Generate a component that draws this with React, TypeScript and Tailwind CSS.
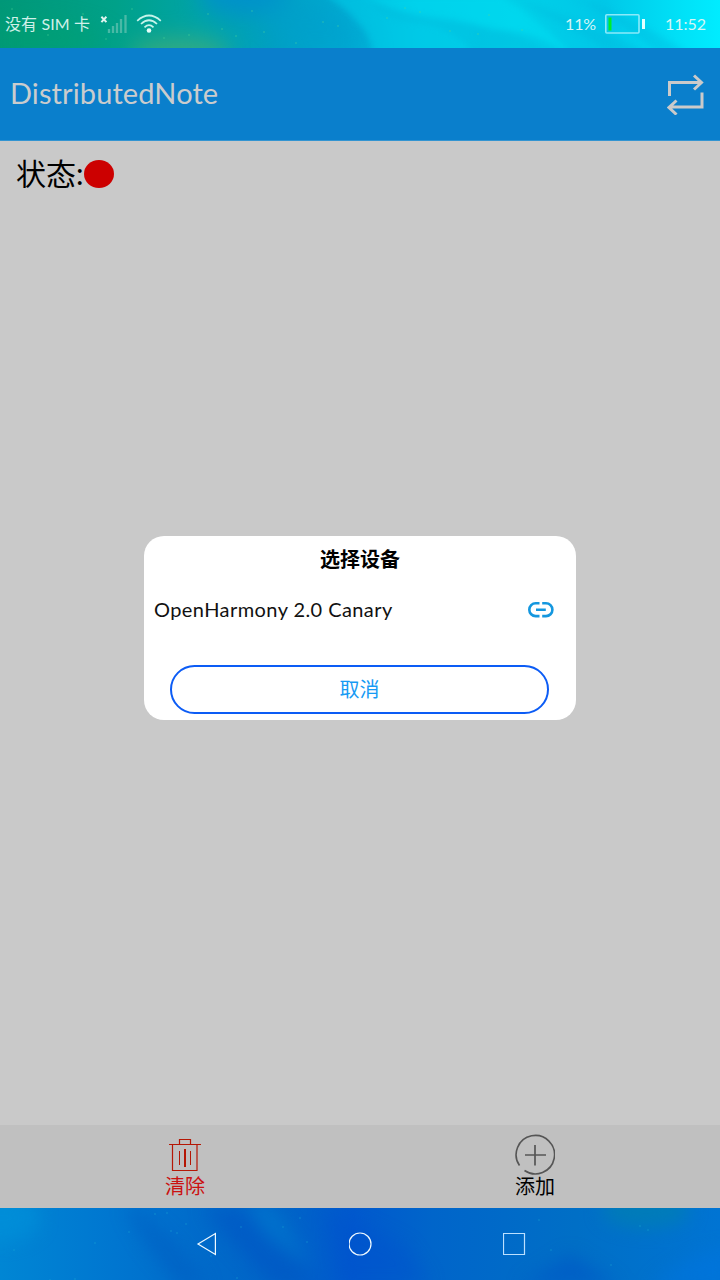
const specks = [[12, 9], [48, 35], [83, 14], [106, 39], [132, 9], [164, 38], [189, 35], [208, 14], [222, 29], [236, 36], [252, 11], [264, 32], [296, 43], [323, 22], [338, 26], [387, 18], [405, 8], [420, 12], [450, 31], [489, 15], [522, 30], [478, 34]];
const navSpecks = [[14, 42], [95, 35], [129, 24], [155, 6], [167, 5], [171, 23], [177, 25], [186, 16], [241, 19], [283, 19], [300, 10], [307, 34], [75, 71], [50, 72], [237, 70], [211, 48], [539, 12], [640, 18], [648, 22], [551, 42], [611, 57]];

function StatusArt() {
  return (
    <svg className="absolute inset-0" width="720" height="48" viewBox="0 0 720 48" aria-hidden="true">
      <defs>
        <linearGradient id="sky">
          <stop offset="0" stopColor="#009878" />
          <stop offset=".16" stopColor="#00a189" />
          <stop offset=".28" stopColor="#00a4a8" />
          <stop offset=".38" stopColor="#00a0c2" />
          <stop offset=".48" stopColor="#00acd4" />
          <stop offset=".58" stopColor="#00c4e4" />
          <stop offset=".72" stopColor="#00cfe8" />
          <stop offset=".84" stopColor="#00c8e8" />
          <stop offset=".95" stopColor="#00e2f8" />
          <stop offset="1" stopColor="#00ecff" />
        </linearGradient>
        <filter id="soft" filterUnits="userSpaceOnUse" x="-60" y="-60" width="840" height="170" colorInterpolationFilters="sRGB"><feGaussianBlur stdDeviation="11" /></filter>
        <filter id="edge" filterUnits="userSpaceOnUse" x="-60" y="-60" width="840" height="170" colorInterpolationFilters="sRGB"><feGaussianBlur stdDeviation="3" /></filter>
      </defs>
      <rect width="720" height="48" fill="url(#sky)" />
      <g filter="url(#soft)">
        <ellipse cx="242" cy="-5" rx="44" ry="20" fill="#0090cc" opacity=".9" />
        <ellipse cx="180" cy="54" rx="50" ry="17" fill="#3cac7c" opacity=".8" />
        <path d="M0 22Q50 14 110 36L80 52H0Z" fill="#00a26a" opacity=".4" />
        <path d="M255 0H325L363 30L373 53H290Z" fill="#009dcb" opacity=".5" />
      </g>
      <g filter="url(#edge)">
        <path d="M325-5H363Q380 15 457 19Q487 23 466 55H374Q370 33 358 23Q349 10 325-5Z" fill="#00cdea" opacity=".55" />
        <path d="M360-5H500Q540 20 570 52H545Q517 29 479 26Q390 15 360-5Z" fill="#00dff3" opacity=".5" />
        <path d="M364-4Q388 14 454 19Q482 25 491 31Q531 28 563 52H473Q450 25 409 22Q376 17 364-4Z" fill="#00bddd" opacity=".45" />
        <path d="M510-4L568 18L650 52H611Q556 20 510-4Z" fill="#00b8dd" opacity=".4" />
        <path d="M568-5Q610 7 650 30L687 52H656Q610 14 568-5Z" fill="#00b9df" opacity=".4" />
      </g>
      {specks.map(([x, y], i) => <circle key={i} cx={x} cy={y} r=".7" fill="#54dc9b" opacity=".65" />)}
    </svg>
  );
}

function NavArt() {
  return (
    <svg className="absolute inset-0" width="720" height="72" viewBox="0 0 720 72" aria-hidden="true">
      <defs>
        <linearGradient id="sea">
          <stop offset="0" stopColor="#0086d4" />
          <stop offset=".16" stopColor="#0076d0" />
          <stop offset=".3" stopColor="#0069c9" />
          <stop offset=".4" stopColor="#0064c8" />
          <stop offset=".49" stopColor="#0059ce" />
          <stop offset=".6" stopColor="#0065ca" />
          <stop offset=".8" stopColor="#006fc6" />
          <stop offset="1" stopColor="#0074d3" />
        </linearGradient>
        <filter id="mist" filterUnits="userSpaceOnUse" x="-60" y="-60" width="840" height="200" colorInterpolationFilters="sRGB"><feGaussianBlur stdDeviation="9" /></filter>
      </defs>
      <rect width="720" height="72" fill="url(#sea)" />
      <g filter="url(#mist)">
        <path d="M125 0L145 35L180 78H208L175 35L138 0Z" fill="#0054bd" opacity=".4" />
        <path d="M203 0L229 31L273 78H315L280 25L240 0Z" fill="#0051c4" opacity=".5" />
        <path d="M245-4L267 30L312 60L280 10L266-4Z" fill="#007bcf" opacity=".65" />
        <path d="M325 0L405 38L430 76H340Z" fill="#0050ce" opacity=".4" />
        <path d="M520 78L570 46L620 78Z" fill="#0055c6" opacity=".6" />
        <ellipse cx="646" cy="2" rx="44" ry="18" fill="#0080b0" opacity=".7" />
        <ellipse cx="0" cy="10" rx="40" ry="24" fill="#0092da" opacity=".6" />
        <path d="M650 80Q687 45 730 40V80Z" fill="#0075df" opacity=".6" />
      </g>
      {navSpecks.map(([x, y], i) => <circle key={i} cx={x} cy={y} r=".7" fill="#20b1d7" opacity=".6" />)}
    </svg>
  );
}

function StatusBar() {
  return (
    <div className="relative h-12 shrink-0 overflow-hidden">
      <StatusArt />
      <div className="relative flex h-full items-center text-[16px] leading-none text-[#d5f6f6]">
        <span className="ml-[5px] w-[95px] whitespace-nowrap tracking-[0.1px] text-[#d0f0e9]">没有 SIM 卡</span>
        <svg width="62" height="48" viewBox="0 0 62 48" fill="none">
          <path d="M1.4 16.8l5 5.3m0-5.3l-5 5.3" stroke="#e0f4ef" strokeWidth="2" />
          <path d="M9 29v4M13 26v7M17 23v10M21 19v14M25.5 15v18" stroke="#49b9a6" strokeWidth="2.3" />
          <path d="M37.2 20.8Q49 10.2 60.8 20.8M41 24Q49 16.5 57 24M44.5 27.3Q49 23 53.5 27.3" stroke="#c6f4eb" strokeWidth="1.7" />
          <circle cx="49" cy="30.5" r="2.3" fill="#e7fffa" />
        </svg>
        <span className="ml-auto w-[39px] tracking-[-0.1px]">11%</span>
        <svg width="42" height="48" viewBox="0 0 42 48" fill="none">
          <rect x="1.8" y="14.8" width="33.2" height="18.2" rx="1" stroke="#8beafa" strokeWidth="1.6" />
          <path d="M4.5 17.5h3v13h-3z" fill="#00ee25" />
          <path d="M38 19h3v10h-3z" fill="#e3ffff" />
        </svg>
        <span className="ml-[19px] w-[55px]">11:52</span>
      </div>
    </div>
  );
}

function DeviceDialog() {
  return (
    <div className="absolute inset-0 flex items-center justify-center">
      <section className="flex h-[184px] w-[432px] flex-col rounded-[20px] bg-white">
        <h2 className="mt-[9px] text-center text-[20px] leading-[28px] font-bold">选择设备</h2>
        <div className="mt-[22px] flex h-[30px] items-center pr-[22px] pl-[10px]">
          <span className="pb-[2px] text-[20px] tracking-[0.42px] whitespace-nowrap text-[#111]">OpenHarmony 2.0 Canary</span>
          <svg className="ml-auto" width="27" height="18" viewBox="0 0 27 18" fill="none" stroke="#1497df" strokeWidth="2.6">
            <path d="M12.5 2.3H8.7a6.2 6.2 0 0 0 0 12.8h3.8M15.2 2.3H19a6.2 6.2 0 0 1 0 12.8h-3.8M9 8.7h9.8" />
          </svg>
        </div>
        <button className="mt-[40px] ml-[26px] h-[49px] w-[379px] rounded-full border-2 border-[#0c5cf5] pb-[2px] text-[20px] leading-[30px] text-[#169af4]">取消</button>
      </section>
    </div>
  );
}

export default function App() {
  return (
    <div className="flex h-[1280px] w-[720px] flex-col overflow-hidden bg-[#c9c9c9] font-['Lato','Noto_Sans_CJK_SC',sans-serif] text-black">
      <StatusBar />
      <div className="relative flex flex-1 flex-col">
        <header className="flex h-[93px] items-center justify-between border-b border-[#3294d1] bg-[#0a7fcc] pr-[15px] pl-[10px] text-[#cacccd]">
          <h1 className="pb-[2px] text-[29px] leading-[36px] tracking-[0.1px]">DistributedNote</h1>
          <svg width="38" height="42" viewBox="0 -1 38 42" fill="none" stroke="#cacaca" strokeWidth="3">
            <path d="M2.5 22V8.5H34M27 1.5l7.5 7-7.5 7M35 18.5V33H3M9.5 26.5L2 33.5l7.5 7" />
          </svg>
        </header>
        <main className="flex-1 px-4 pt-[10px]">
          <div className="flex items-center text-[30px] leading-[44px]">
            <span>状态:</span>
            <span className="mt-[2px] h-7 w-[30px] rounded-[50%] bg-[#cc0000]" />
          </div>
        </main>
        <footer className="grid h-[83px] shrink-0 grid-cols-2 bg-[#c0c0c0] px-[10px] pt-[9px] text-[20px]">
          <button className="flex flex-col items-center text-[#cb1111]">
            <svg width="40" height="40" viewBox="0 0 40 40" fill="none" stroke="#b51705">
              <path d="M4 10.5h32M14.5 10V5.5h11V10M7.5 11v25.5h24.5V11" strokeWidth="1.2" />
              <path d="M14.5 17v14M25.5 17v14" />
              <path d="M20 15v18" strokeWidth="2" />
            </svg>
            <span className="-mt-[2px] leading-[28px]">清除</span>
          </button>
          <button className="flex flex-col items-center">
            <svg width="40" height="42" viewBox="0 0 40 42" fill="none" stroke="#555">
              <path d="M4.5 31.5A19.2 19.2 0 1 1 9.5 36.5" strokeWidth="1.6" />
              <path d="M10 21h21M20 11v20.5" strokeWidth="1.7" />
            </svg>
            <span className="-mt-[4px] leading-[28px]">添加</span>
          </button>
        </footer>
        <DeviceDialog />
      </div>
      <nav className="relative h-[72px] shrink-0 overflow-hidden">
        <NavArt />
        <div className="relative flex h-full items-center gap-[130px] pl-[195px]">
          <svg width="24" height="24" fill="none" stroke="#f0faff" strokeWidth="1.2"><path d="M3 12L20.4 1.5v21Z" /></svg>
          <svg width="24" height="24" fill="none" stroke="#f0faff" strokeWidth="1.2"><circle cx="11" cy="12" r="11" /></svg>
          <svg width="24" height="24" fill="none" stroke="#bce0ff" strokeWidth="1.2"><path d="M.5 1.5h21v21H.5z" /></svg>
        </div>
      </nav>
    </div>
  );
}
